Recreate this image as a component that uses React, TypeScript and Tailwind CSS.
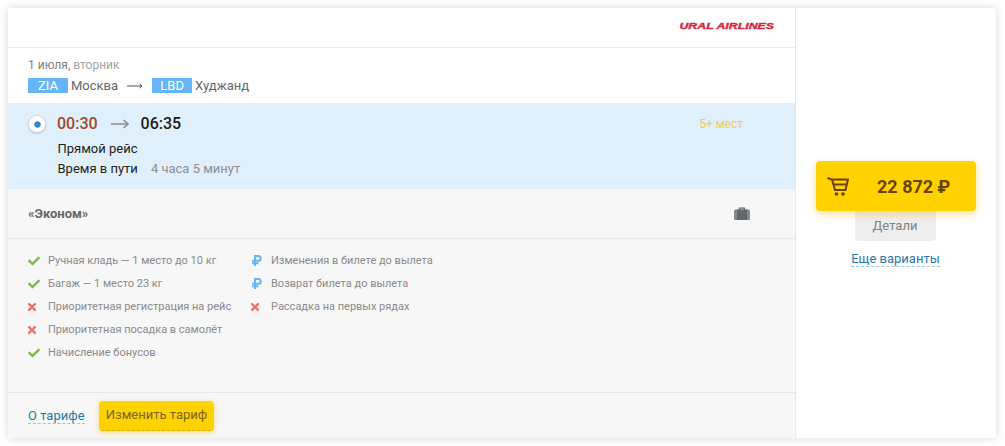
import { Circle } from 'lucide-react';
import { FaCheck, FaTimes } from 'react-icons/fa';

type Mark = 'yes' | 'no' | 'paid';

const leftFeatures: { mark: Mark; label: string }[] = [
  { mark: 'yes', label: 'Ручная кладь — 1 место до 10 кг' },
  { mark: 'yes', label: 'Багаж — 1 место 23 кг' },
  { mark: 'no', label: 'Приоритетная регистрация на рейс' },
  { mark: 'no', label: 'Приоритетная посадка в самолёт' },
  { mark: 'yes', label: 'Начисление бонусов' },
];

const rightFeatures: { mark: Mark; label: string }[] = [
  { mark: 'paid', label: 'Изменения в билете до вылета' },
  { mark: 'paid', label: 'Возврат билета до вылета' },
  { mark: 'no', label: 'Рассадка на первых рядах' },
];

const FeatureIcon = ({ mark }: { mark: Mark }) => {
  if (mark === 'yes') {
    return <FaCheck size={12} className="-mt-px text-[#7cb84f]" />;
  }
  if (mark === 'no') {
    return <FaTimes size={12} className="-ml-[2px] -mt-px text-[#f26a6a]" />;
  }
  return (
    <svg width="10" height="11" viewBox="0 0 10 11" fill="none" stroke="#6cb6ee" strokeWidth="2" className="-mt-[2px] ml-px">
      <path d="M3 11V1h3.300a2.300 2.300 0 0 1 0 4.800H0M0 8.300h6.500" />
    </svg>
  );
};

const FeatureList = ({ items, className }: { items: { mark: Mark; label: string }[]; className: string }) => (
  <ul className={className}>
    {items.map((item) => (
      <li key={item.label} className="flex h-[23px] items-center">
        <span className="flex w-[20px] shrink-0 items-center">
          <FeatureIcon mark={item.mark} />
        </span>
        <span className="whitespace-nowrap text-[11px] text-[#8a8a8a]">{item.label}</span>
      </li>
    ))}
  </ul>
);

export default function App() {
  return (
    <div className="h-[446px] w-[1005px] overflow-hidden bg-white p-2 font-['Roboto',sans-serif]">
      <div className="flex h-[430px] w-[988px] overflow-hidden rounded-[3px] bg-white shadow-[0_0_8px_rgba(0,0,0,0.16)]">
        {/* левая колонка: рейс и тариф */}
        <div className="flex w-[787px] shrink-0 flex-col">
          <div className="flex h-[40px] shrink-0 items-center justify-end border-b border-[#ececec] pr-[21px]">
            <span className="origin-right scale-x-[1.37] whitespace-nowrap pb-[2px] font-['Liberation_Sans',sans-serif] text-[9px] font-bold italic leading-none text-[#d8253c] [-webkit-text-stroke:0.35px_#d8253c]">
              URAL AIRLINES
            </span>
          </div>

          <div className="flex h-[55px] shrink-0 flex-col pl-5 pt-[9px]">
            <div className="text-xs leading-[16px] text-[#a3a3a3]">
              <span className="text-[#808080]">1 июля,</span> вторник
            </div>
            <div className="mt-[3px] flex items-center text-[13px] text-[#666]">
              <span className="flex h-[15px] w-10 items-center justify-center bg-[#66b5f6] text-[13px] text-white">ZIA</span>
              <span className="ml-[3px]">Москва</span>
              <svg width="16" height="6" viewBox="0 0 16 6" className="ml-[9px]" fill="none" stroke="#555">
                <path d="M0 3h15M12.500 1 15 3l-2.500 2" />
              </svg>
              <span className="ml-[9px] flex h-[15px] w-10 items-center justify-center bg-[#66b5f6] text-[13px] text-white">LBD</span>
              <span className="ml-[3px]">Худжанд</span>
            </div>
          </div>

          <div className="flex h-[86px] shrink-0 flex-col bg-[#dfeffc] pl-5 pr-[52px] pt-[11px]">
            <div className="flex h-5 items-center">
              <span className="flex h-[18px] w-[18px] items-center justify-center rounded-full border border-[#d8d8d8] bg-white shadow-[0_1px_2px_rgba(0,0,0,0.15)]">
                <Circle size={7} className="fill-[#2d8ac4] text-[#2d8ac4]" />
              </span>
              <span className="ml-[11px] text-base font-medium text-[#a2492a]">00:30</span>
              <svg width="18" height="10" viewBox="0 0 18 10" className="ml-[13px]" fill="none" stroke="#8f8f8f" strokeWidth="1.6">
                <path d="M0 5h17M12.500 1 17 5l-4.500 4" />
              </svg>
              <span className="ml-[12px] text-base font-medium text-[#1a1a1a]">06:35</span>
              <span className="ml-auto text-xs text-[#f2cd4c]">5+ мест</span>
            </div>
            <div className="ml-[29.500px] mt-[5px] text-[13px] leading-[20px] text-[#222]">Прямой рейс</div>
            <div className="ml-[29.500px] text-[13px] leading-[20px] text-[#222]">
              Время в пути<span className="ml-[13px] text-[#8f8f8f]">4 часа 5 минут</span>
            </div>
          </div>

          <div className="flex min-h-0 flex-1 flex-col bg-[#f7f7f7]">
            <div className="flex h-[50px] shrink-0 items-center justify-between border-b border-[#e8e8e8] pl-5 pr-[45px]">
              <span className="text-[13px] font-bold text-[#666]">«Эконом»</span>
              <svg width="16" height="13" viewBox="0 0 16 13">
                <path d="M5.500 3V1.200h5V3" fill="none" stroke="#6c6c6c" strokeWidth="1.300" />
                <rect x="0" y="2.500" width="16" height="10.500" rx="1.500" fill="#7d8b99" />
                <rect x="3" y="2.500" width="10" height="10.500" fill="#666666" />
              </svg>
            </div>

            <div className="flex h-[154px] shrink-0 items-start border-b border-[#e8e8e8] pl-5 pt-[11px]">
              <FeatureList items={leftFeatures} className="w-[223px] shrink-0" />
              <FeatureList items={rightFeatures} className="flex-1" />
            </div>

            <div className="flex flex-1 items-center pl-5">
              <a className="border-b border-dashed border-[#9dc3dd] text-[13px] leading-[15px] text-[#2a77a8]">О тарифе</a>
              <button className="ml-[14px] h-[30px] w-[115px] rounded border-b border-dashed border-[#d4ae00] bg-[#ffd200] pl-px text-[13px] text-[#7a6524] shadow-[0_2px_6px_rgba(240,190,0,0.45)]">
                Изменить тариф
              </button>
            </div>
          </div>
        </div>

        {/* правая колонка: цена */}
        <div className="flex flex-1 flex-col items-center border-l border-[#e8e8e8] pt-[153px]">
          <button className="relative z-10 flex h-[50px] w-[160px] items-center rounded bg-[#ffd200] pl-[11px] text-[#6a4200] shadow-[0_3px_8px_rgba(230,180,0,0.4)]">
            <svg width="22" height="19" viewBox="0 0 22 19" fill="none" stroke="currentColor" strokeWidth="2" className="mt-[1px] shrink-0">
              <path d="M0.500 1 5 2.500 8 13h10.500L21 2.500H5M6.500 7.500h13" />
              <circle cx="9.500" cy="17" r="1.800" fill="currentColor" stroke="none" />
              <circle cx="16" cy="17" r="1.800" fill="currentColor" stroke="none" />
            </svg>
            <span className="ml-[28px] mt-[2px] text-lg font-bold">22 872 ₽</span>
          </button>
          <button className="mr-[2px] h-[30px] w-[81px] rounded-b bg-[#eeeeee] text-[13px] text-[#808080]">Детали</button>
          <a className="mr-px mt-[10px] border-b border-dashed border-[#9dc3dd] text-[13px] leading-[15px] text-[#2a77a8]">Еще варианты</a>
        </div>
      </div>
    </div>
  );
}
